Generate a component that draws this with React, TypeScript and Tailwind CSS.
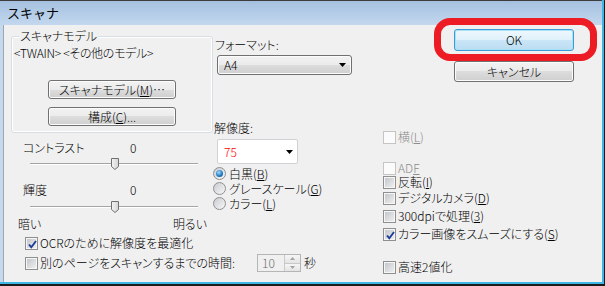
import type { ReactNode } from "react";

function Mn({ c }: { c: string }) {
  return <span className="underline underline-offset-[1px]">{c}</span>;
}

function Button({
  children,
  className = "",
  primary = false,
}: {
  children: ReactNode;
  className?: string;
  primary?: boolean;
}) {
  return (
    <div
      className={`flex items-center justify-center rounded-[3px] border ${
        primary
          ? "border-[#3c9ad6] bg-[linear-gradient(#eef7fd,#dff1fb_50%,#cae6f7_50%,#bcdcf1)] shadow-[inset_0_0_0_1px_#a6e1f8]"
          : "border-[#707070] bg-[linear-gradient(#f2f2f2,#ebebeb_50%,#dddddd_50%,#cfcfcf)] shadow-[inset_0_0_0_1px_#fcfcfc]"
      } ${className}`}
    >
      {children}
    </div>
  );
}

function Check({ checked = false, disabled = false }: { checked?: boolean; disabled?: boolean }) {
  return (
    <span
      className={`relative flex h-[13px] w-[13px] shrink-0 items-center justify-center border ${
        disabled ? "border-[#c5c5c5] bg-[#fbfbfb]" : "border-[#8e8f8f] bg-[#f6f6f6]"
      }`}
    >
      {!disabled && (
        <span className="h-[9px] w-[9px] bg-[linear-gradient(135deg,#c3c7cc,#eeeeee)]" />
      )}
      {checked && (
        <svg className="absolute left-[1px] top-[1px]" width="11" height="11" viewBox="0 0 11 11">
          <path d="M2 5.5 L4.3 8.2 L9 2" fill="none" stroke="#1e3d98" strokeWidth="1.9" />
        </svg>
      )}
    </span>
  );
}

function CheckRow({
  children,
  checked = false,
  disabled = false,
  className = "",
}: {
  children: ReactNode;
  checked?: boolean;
  disabled?: boolean;
  className?: string;
}) {
  return (
    <div className={`flex h-[14px] items-center gap-[2px] ${className}`}>
      <Check checked={checked} disabled={disabled} />
      <span className={`whitespace-nowrap leading-[12px] ${disabled ? "text-[#8d8d8d]" : ""}`}>
        {children}
      </span>
    </div>
  );
}

function Radio({ selected = false, children }: { selected?: boolean; children: ReactNode }) {
  return (
    <div className="flex h-[15px] items-center gap-[3px]">
      <span className="flex h-[13px] w-[13px] shrink-0 items-center justify-center rounded-full border border-[#8e8f8f] bg-[linear-gradient(135deg,#c9ccd1,#f7f7f7)]">
        {selected && (
          <span className="h-[7px] w-[7px] rounded-full bg-[radial-gradient(circle_at_40%_35%,#a6dcfb,#1c74bf_60%,#0d4b8b)]" />
        )}
      </span>
      <span className="whitespace-nowrap leading-[12px]">{children}</span>
    </div>
  );
}

function Slider({ className = "" }: { className?: string }) {
  return (
    <div className={`relative h-[12px] w-[168px] ${className}`}>
      <div className="absolute left-0 right-0 top-[5px] h-[2px] border-t border-[#a5a5a5] bg-white" />
      <svg className="absolute left-[81px] top-0" width="8" height="12" viewBox="0 0 8 12">
        <defs>
          <linearGradient id="th" x1="0" y1="0" x2="1" y2="0">
            <stop offset="0" stopColor="#f4f4f4" />
            <stop offset="1" stopColor="#d4d4d4" />
          </linearGradient>
        </defs>
        <path d="M0.5 0.5 H7.5 V8.5 L4 11.5 L0.5 8.5 Z" fill="url(#th)" stroke="#707070" />
      </svg>
    </div>
  );
}

function Arrow() {
  return (
    <svg width="7" height="4" viewBox="0 0 7 4">
      <path d="M0 0 H7 L3.5 4 Z" fill="#000" />
    </svg>
  );
}

export default function App() {
  return (
    <div className="relative flex h-[286px] w-[605px] flex-col overflow-hidden bg-[#1b1b1b] text-[12px] font-light leading-[14px] text-black font-['Noto_Sans_CJK_JP',sans-serif] [font-feature-settings:'palt']">
      <div className="mb-[2px] mr-[1px] flex flex-1 flex-col bg-[#3db6e6] pb-[2px] pr-[2px]">
        <div className="flex flex-1 flex-col border-t border-[#3c3c3c] bg-[#c6d8ec]">
          {/* title bar */}
          <div className="flex h-[24px] items-center bg-[linear-gradient(#a5c0df,#c3d8ef)] pl-[7px] text-[13px] font-normal [font-feature-settings:normal]">
            スキャナ
          </div>

          {/* client */}
          <div className="ml-[3px] flex flex-1 border-l border-[#98a6b5] bg-[#f0f0f0]">
            <div className="flex w-[366px] flex-col">
              <div className="flex h-[206px]">
                {/* left column */}
                <div className="flex w-[209px] flex-col">
                  <div className="relative ml-[7px] mt-[11px] h-[97px] w-[202px] rounded-[3px] border border-[#d5dfe5] shadow-[inset_0_0_0_1px_#ffffff]">
                    <span className="absolute left-[7px] top-[-8px] bg-[#f0f0f0] px-[1px]">スキャナモデル</span>
                    <div className="ml-[2px] mt-[9px] whitespace-nowrap tracking-[-0.3px]">&lt;TWAIN&gt; &lt;その他のモデル&gt;</div>
                    <Button className="ml-[36px] mt-[20px] h-[19px] w-[128px]">
                      スキャナモデル(<Mn c="M" />)…
                    </Button>
                    <Button className="ml-[36px] mt-[8px] h-[19px] w-[128px]">
                      構成(<Mn c="C" />)...
                    </Button>
                  </div>

                  <div className="mt-[8px] flex h-[14px] pl-[19px]">
                    <span className="w-[107px]">コントラスト</span>
                    <span>0</span>
                  </div>
                  <Slider className="ml-[26px] mt-[3px]" />

                  <div className="mt-[13px] flex h-[14px] pl-[19px]">
                    <span className="w-[107px]">輝度</span>
                    <span>0</span>
                  </div>
                  <Slider className="ml-[26px] mt-[4px]" />

                  <div className="ml-[14px] mt-[4px] flex h-[14px] w-[189px] justify-between">
                    <span>暗い</span>
                    <span>明るい</span>
                  </div>
                </div>

                {/* middle column */}
                <div className="flex w-[157px] flex-col">
                  <div className="mt-[13px] h-[14px] pl-[2px]">フォーマット:</div>
                  <div className="ml-[4px] mt-[3px] flex h-[20px] w-[135px] items-center justify-between rounded-[3px] border border-[#707070] bg-[linear-gradient(#f2f2f2,#ebebeb_50%,#dddddd_50%,#cfcfcf)] pl-[6px] pr-[5px] shadow-[inset_0_0_0_1px_#fcfcfc]">
                    <span>A4</span>
                    <Arrow />
                  </div>
                  <div className="ml-[1px] mt-[46px] h-[14px]">解像度:</div>
                  <div className="ml-[4px] mt-[4px] flex h-[25px] w-[81px] items-center justify-between rounded-[2px] border border-[#d0d3d6] bg-white pl-[6px] pr-[4px]">
                    <span className="text-[#ff0000]">75</span>
                    <Arrow />
                  </div>
                  <div className="mt-[2px] flex flex-col">
                    <Radio selected>
                      白黒(<Mn c="B" />)
                    </Radio>
                    <Radio>
                      グレースケール(<Mn c="G" />)
                    </Radio>
                    <Radio>
                      カラー(<Mn c="L" />)
                    </Radio>
                  </div>
                </div>
              </div>

              <CheckRow checked className="mt-[5px] pl-[21px]">
                OCRのために解像度を最適化
              </CheckRow>

              <div className="mt-[4px] flex h-[18px] items-center pl-[21px]">
                <div className="w-[232px]">
                  <CheckRow>別のページをスキャンするまでの時間:</CheckRow>
                </div>
                <div className="flex h-[18px] w-[44px] border border-[#b5b5b5] bg-[#f0f0f0]">
                  <span className="flex flex-1 items-center pl-[4px] text-[#6d6d6d]">10</span>
                  <div className="flex w-[16px] flex-col border-l border-[#c9c9c9]">
                    <div className="flex flex-1 items-center justify-center border-b border-[#c9c9c9] bg-[linear-gradient(#f6f6f6,#e4e4e4)]">
                      <svg width="5" height="3" viewBox="0 0 5 3">
                        <path d="M0 3 H5 L2.5 0 Z" fill="#a3a3a3" />
                      </svg>
                    </div>
                    <div className="flex flex-1 items-center justify-center bg-[linear-gradient(#f6f6f6,#e4e4e4)]">
                      <svg width="5" height="3" viewBox="0 0 5 3">
                        <path d="M0 0 H5 L2.5 3 Z" fill="#a3a3a3" />
                      </svg>
                    </div>
                  </div>
                </div>
                <span className="ml-[3px]">秒</span>
              </div>
            </div>

            {/* right column */}
            <div className="flex flex-1 flex-col">
              <Button primary className="ml-[84px] mt-[4px] h-[22px] w-[120px]">
                OK
              </Button>
              <Button className="ml-[84px] mt-[10px] h-[21px] w-[120px]">キャンセル</Button>

              <CheckRow disabled className="ml-[13px] mt-[48px]">
                横(<Mn c="L" />)
              </CheckRow>
              <CheckRow disabled className="ml-[13px] mt-[17px]">
                AD<Mn c="F" />
              </CheckRow>
              <CheckRow className="ml-[13px]">
                反転(<Mn c="I" />)
              </CheckRow>
              <CheckRow className="ml-[13px] mt-[2px]">
                デジタルカメラ(<Mn c="D" />)
              </CheckRow>
              <CheckRow className="ml-[13px] mt-[4px]">
                300dpiで処理(<Mn c="3" />)
              </CheckRow>
              <CheckRow checked className="ml-[13px] mt-[4px]">
                カラー画像をスムーズにする(<Mn c="S" />)
              </CheckRow>
              <CheckRow className="ml-[13px] mt-[19px]">高速2値化</CheckRow>
            </div>
          </div>
        </div>
      </div>

      {/* red annotation ring around OK */}
      <div className="absolute left-[434px] top-[18px] h-[43px] w-[163px] rounded-[16px] border-[7px] border-[#ed1c24]" />
    </div>
  );
}
